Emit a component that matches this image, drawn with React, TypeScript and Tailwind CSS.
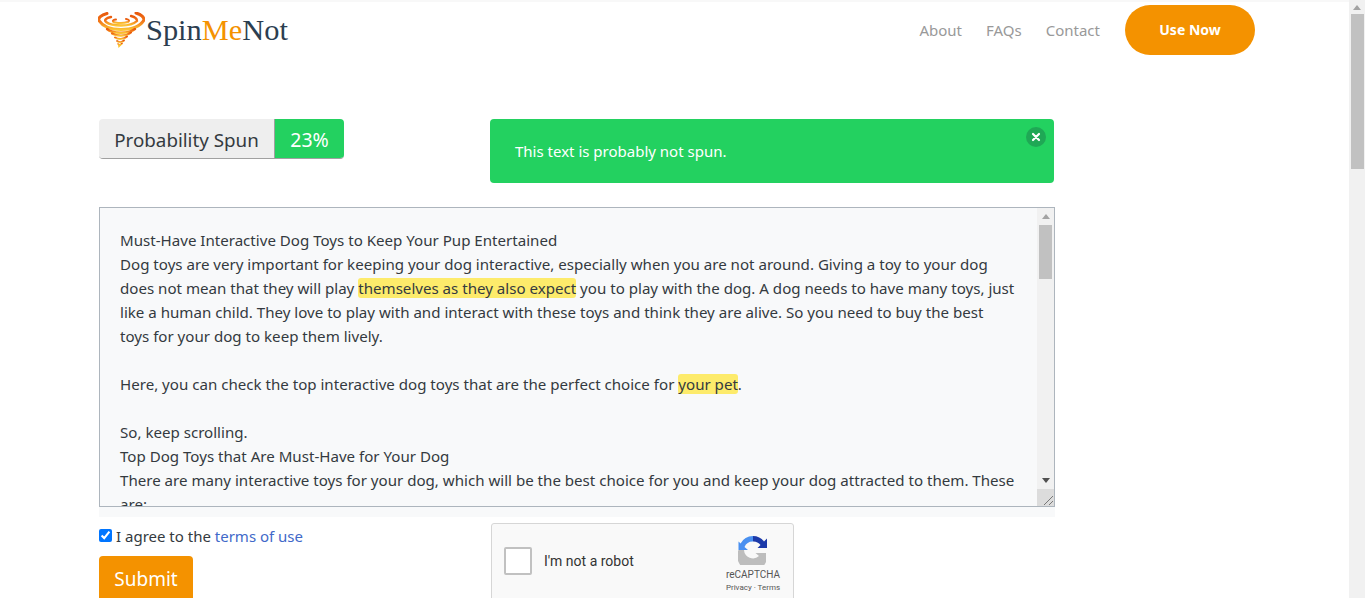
import React from "react";

const Tornado = () => (
  <svg width="47" height="36" viewBox="0 0 47 36" className="shrink-0">
    <defs>
      <linearGradient id="t" x1="0" y1="0" x2="0" y2="1">
        <stop offset="0" stopColor="#e8590c" />
        <stop offset="0.5" stopColor="#f2761a" />
        <stop offset="1" stopColor="#fcc433" />
      </linearGradient>
    </defs>
    <g fill="none" stroke="url(#t)" strokeLinecap="round">
      <path d="M9 1.5 C3 3 0 6 1 8.5 C5 15 14 17.5 23 17.5 C32 17.5 42 15 46 8 C46 5 43 2.5 38 1" strokeWidth="3" />
      <path d="M13 5 C8 6 6 8 8 10 C12 13 18 13.5 23 13.5 C29 13.5 35 13 39 9 C39 7 37 5 33 4" strokeWidth="2.4" />
      <path d="M18 7.5 C14 8 14 10 17 10.5 C21 11.2 27 11 30 10 C32 9 31 7.5 28 7" strokeWidth="2" />
      <path d="M9 17 C14 21.5 30 22.5 37 17" strokeWidth="2.4" />
      <path d="M14 21.5 C19 24.5 28 24.5 33 20.5" strokeWidth="2.2" />
      <path d="M17 25.5 C20 27.5 26 27.5 29 24.5" strokeWidth="2" />
      <path d="M19 29 C21 30.5 24 30.5 26 28.5" strokeWidth="1.8" />
      <path d="M20 32 C21 33 23 33 24 31.5" strokeWidth="1.6" />
    </g>
    <path d="M20 33 L24.5 32 L20.5 36 Z" fill="#fcc433" />
  </svg>
);

const Recaptcha = () => (
  <svg width="30" height="30" viewBox="0 0 30 30">
    <path d="M15 1 A14 14 0 0 0 2.6 8.5 L0.5 6.5 V15 H10 L6.5 12 A9 9 0 0 1 15 6.5 Z" fill="#4a90f0" />
    <path d="M15 1 A14 14 0 0 1 26 6.5 L29 3.5 V13 H19.5 L22.5 10 A9 9 0 0 0 15 6.5 Z" fill="#1c3aa9" />
    <path d="M0.5 15 H6 A9 9 0 0 0 21 21 L17.5 18 H28 V27 A14 14 0 0 1 0.5 15 Z" fill="#bdbdbd" />
  </svg>
);

const Mark = ({ children }: { children: React.ReactNode }) => (
  <span className="bg-[#fdeb6b] rounded-[3px]">{children}</span>
);

export default function App() {
  return (
    <div className="flex h-[598px] w-[1365px] overflow-hidden bg-white font-['Noto_Sans','Open_Sans',sans-serif] text-[#343a40]">
      <div className="w-[1349px] shrink-0">
        <div className="h-[2px] bg-[#f8f8f8]" />
        <header className="flex h-[68px] items-start justify-between pl-[98px] pr-[94px]">
          <div className="flex items-center gap-px pt-[10px]">
            <Tornado />
            <span className="font-['Liberation_Serif',serif] text-[30.4px] leading-[36px] text-[#2c3e50]">
              Spin<span className="text-[#f49200]">Me</span>Not
            </span>
          </div>
          <nav className="flex items-start pt-[3px]">
            <a className="mt-[13px] text-[15px] leading-[24px] text-[#999999]">About</a>
            <a className="ml-[24px] mt-[13px] text-[15px] leading-[24px] text-[#999999]">FAQs</a>
            <a className="ml-[24px] mt-[13px] text-[15px] leading-[24px] text-[#999999]">Contact</a>
            <button className="ml-[25px] flex h-[50px] w-[130px] items-center justify-center rounded-[25px] bg-[#f49200] pb-px text-[14px] font-bold text-white">
              Use Now
            </button>
          </nav>
        </header>

        <section className="mt-[49px] flex items-start pl-[99px]">
          <div className="flex h-[40px] w-[245px] overflow-hidden rounded-[4px] border-b border-[#a0a0a0]">
            <div className="flex w-[175px] items-center justify-center bg-[#eeeeee] pt-[3px] text-[18.8px] text-[#343a40]">Probability Spun</div>
            <div className="flex flex-1 items-center justify-center border-l border-[#a0a0a0] bg-[#23d160] pt-[3px] text-[19.5px] text-white">23%</div>
          </div>
          <div className="relative ml-[146px] flex h-[64px] w-[564px] items-center rounded-[4px] bg-[#23d160] pl-[25px] text-[15px] text-white">
            This text is probably not spun.
            <span className="absolute right-[8px] top-[8px] flex h-[20px] w-[20px] items-center justify-center rounded-full bg-[#1fa855]">
              <svg width="10" height="10" viewBox="0 0 10 10">
                <path d="M2 2 L8 8 M8 2 L2 8" stroke="#fff" strokeWidth="2.2" strokeLinecap="round" />
              </svg>
            </span>
          </div>
        </section>

        <div className="ml-[99px] mt-[24px] h-[310px] w-[956px] bg-[#f8f9fa]">
          <div className="flex h-[300px] border border-[#adb5bd]">
            <div className="flex-1 overflow-hidden pl-[20px] pt-[20px] text-[15.1px] leading-[24px] whitespace-nowrap text-[#343a40]">
              Must-Have Interactive Dog Toys to Keep Your Pup Entertained
              <br />
              Dog toys are very important for keeping your dog interactive, especially when you are not around. Giving a toy to your dog
              <br />
              does not mean that they will play <Mark>themselves as they also expect</Mark> you to play with the dog. A dog needs to have many toys, just
              <br />
              like a human child. They love to play with and interact with these toys and think they are alive. So you need to buy the best
              <br />
              toys for your dog to keep them lively.
              <br />
              <br />
              Here, you can check the top interactive dog toys that are the perfect choice for <Mark>your pet</Mark>.
              <br />
              <br />
              So, keep scrolling.
              <br />
              Top Dog Toys that Are Must-Have for Your Dog
              <br />
              There are many interactive toys for your dog, which will be the best choice for you and keep your dog attracted to them. These
              <br />
              are:
            </div>
            <div className="flex w-[17px] shrink-0 flex-col bg-[#f1f1f1]">
              <div className="flex h-[17px] items-center justify-center">
                <div className="h-0 w-0 border-x-[4px] border-b-[5px] border-x-transparent border-b-[#a3a3a3]" />
              </div>
              <div className="mx-[2px] h-[54px] bg-[#c1c1c1]" />
              <div className="flex-1" />
              <div className="flex h-[17px] items-center justify-center">
                <div className="h-0 w-0 border-x-[4px] border-t-[5px] border-x-transparent border-t-[#505050]" />
              </div>
              <div className="flex h-[17px] items-end justify-end bg-[#dcdcdc]">
                <svg width="14" height="14" viewBox="0 0 14 14">
                  <path d="M4 13 L13 4 M9 13 L13 9" stroke="#777" strokeWidth="1" />
                </svg>
              </div>
            </div>
          </div>
        </div>

        <section className="mt-[6px] flex items-start pl-[99px]">
          <div className="w-[392px]">
            <label className="flex h-[24px] items-center text-[15px] text-[#343a40]">
              <input type="checkbox" defaultChecked className="m-0 h-[13px] w-[13px] accent-[#0075ff]" />
              <span className="ml-[4px] mt-[2px]">
                I agree to the <a className="text-[#4169c9]">terms of use</a>
              </span>
            </label>
            <button className="mt-[9px] flex h-[48px] w-[94px] items-center justify-center rounded-[4px] bg-[#f49200] pb-[2px] text-[19px] text-white">
              Submit
            </button>
          </div>
          <div className="flex h-[78px] w-[303px] rounded-[3px] border border-[#d6d6d6] bg-[#f9f9f9] font-['Roboto',sans-serif]">
            <div className="ml-[12px] mt-[23px] h-[28px] w-[28px] rounded-[2px] border-2 border-[#c1c1c1] bg-white" />
            <span className="ml-[12px] mt-[27px] text-[14px] leading-[20px] text-[#333333]">I'm not a robot</span>
            <div className="ml-auto mr-[11px] flex w-[58px] flex-col items-center pt-[11px]">
              <Recaptcha />
              <span className="mt-[4px] whitespace-nowrap text-[10px] leading-[12px] text-[#555555]">reCAPTCHA</span>
              <span className="mt-px whitespace-nowrap text-[8px] leading-[12px] text-[#555555]">Privacy · Terms</span>
            </div>
          </div>
        </section>
      </div>

      <div className="flex w-[16px] shrink-0 flex-col bg-[#f1f1f1]">
        <div className="flex h-[14px] items-center justify-center">
          <div className="h-0 w-0 border-x-[4px] border-b-[5px] border-x-transparent border-b-[#a3a3a3]" />
        </div>
        <div className="ml-[2px] mr-px h-[155px] bg-[#c1c1c1]" />
      </div>
    </div>
  );
}
